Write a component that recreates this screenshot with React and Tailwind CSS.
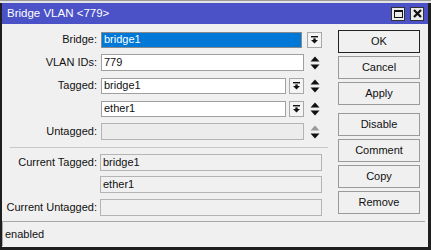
import React from "react";

function DropBtn() {
  return (
    <div className="w-[15px] h-[16px] border border-[#a8a8a8] bg-[#f4f4f4] flex items-center justify-center shrink-0">
      <svg width="7" height="8" viewBox="0 0 7 8">
        <rect x="0" y="0" width="7" height="1.4" fill="#111" />
        <rect x="2.3" y="2.4" width="2.4" height="1.8" fill="#111" />
        <path d="M0 4 H7 L3.5 7.6 Z" fill="#111" />
      </svg>
    </div>
  );
}

function UpDown({ disabled }) {
  return (
    <svg width="10" height="14" viewBox="0 0 10 14" className="shrink-0">
      <path d="M5 0.5 L9.5 5.5 H0.5 Z" fill={disabled ? "#9a9a9a" : "#111"} />
      <path d="M0.5 8.5 H9.5 L5 13.5 Z" fill="#111" />
    </svg>
  );
}

function Label({ children, w = "w-[95px]" }) {
  return <div className={`${w} shrink-0 text-right pr-0 leading-none`}>{children}</div>;
}

function Btn({ children, primary }) {
  return (
    <div
      className={`h-[23px] w-[82px] flex items-center justify-center bg-[#f0f0f0] border ${
        primary ? "border-[#222]" : "border-[#9a9a9a]"
      } text-[11px] text-[#111]`}
    >
      {children}
    </div>
  );
}

export default function App() {
  return (
    <div className="w-[431px] h-[250px] overflow-hidden bg-[#ededed] font-['Liberation_Sans',Arial,sans-serif] text-[11px] text-[#111]">
      <div className="h-[3px] bg-[#e4e4e4] border-t border-[#9a9a9a]" />
      <div className="h-[247px] flex flex-col border-l-2 border-r-[3px] border-b-[3px] border-[#1e1e1e] bg-[#f0f0f0]">
        {/* Title bar */}
        <div className="h-[21px] bg-[#4b51c6] flex items-center pl-[5px] pr-[4px] shrink-0">
          <div className="text-white text-[11.5px] flex-1 leading-none">Bridge VLAN &lt;779&gt;</div>
          <div className="flex gap-[5px]">
            <div className="w-[14px] h-[14px] bg-[#ebebeb] border border-[#333] flex items-center justify-center">
              <div className="w-[9px] h-[8px] border border-[#111] border-t-2" />
            </div>
            <div className="w-[14px] h-[14px] bg-[#ebebeb] border border-[#333] flex items-center justify-center">
              <svg width="9" height="9" viewBox="0 0 9 9">
                <path d="M1 1 L8 8 M8 1 L1 8" stroke="#111" strokeWidth="2.2" />
              </svg>
            </div>
          </div>
        </div>

        {/* Body */}
        <div className="h-[197px] flex shrink-0">
          <div className="w-[320px] pt-[7px] flex flex-col">
            <div className="flex items-center h-[17px] gap-[4px]">
              <Label>Bridge:</Label>
              <div className="w-[202px] h-[16px] border border-[#8a8a8a] bg-[#0078d7] text-white flex items-center pl-[2px]">bridge1</div>
              <div className="ml-[1px]"><DropBtn /></div>
            </div>
            <div className="flex items-center h-[17px] gap-[4px] mt-[6px]">
              <Label>VLAN IDs:</Label>
              <div className="w-[203px] h-[17px] border border-[#a0a0a0] bg-white flex items-center pl-[2px]">779</div>
              <div className="ml-[2px]"><UpDown /></div>
            </div>
            <div className="flex items-center h-[17px] gap-[4px] mt-[6px]">
              <Label>Tagged:</Label>
              <div className="w-[185px] h-[16px] border border-[#a0a0a0] bg-white flex items-center pl-[2px]">bridge1</div>
              <div className="ml-[-1px]"><DropBtn /></div>
              <div className="ml-[2px]"><UpDown /></div>
            </div>
            <div className="flex items-center h-[17px] gap-[4px] mt-[6px]">
              <Label> </Label>
              <div className="w-[185px] h-[16px] border border-[#a0a0a0] bg-white flex items-center pl-[2px]">ether1</div>
              <div className="ml-[-1px]"><DropBtn /></div>
              <div className="ml-[2px]"><UpDown /></div>
            </div>
            <div className="flex items-center h-[17px] gap-[4px] mt-[6px]">
              <Label>Untagged:</Label>
              <div className="w-[203px] h-[17px] border border-[#b4b4b4] bg-[#ececec]" />
              <div className="ml-[2px]"><UpDown disabled /></div>
            </div>
            <div className="h-px bg-[#c8c8c8] ml-[8px] mr-[-6px] mt-[7px]" />
            <div className="flex items-center h-[17px] gap-[3px] mt-[6px]">
              <Label>Current Tagged:</Label>
              <div className="w-[222px] h-[17px] border border-[#b4b4b4] bg-[#f0f0f0] flex items-center pl-[2px]">bridge1</div>
            </div>
            <div className="flex items-center h-[17px] gap-[3px] mt-[5px]">
              <Label> </Label>
              <div className="w-[222px] h-[17px] border border-[#b4b4b4] bg-[#f0f0f0] flex items-center pl-[2px]">ether1</div>
            </div>
            <div className="flex items-center h-[17px] gap-[3px] mt-[6px]">
              <Label>Current Untagged:</Label>
              <div className="w-[222px] h-[17px] border border-[#b4b4b4] bg-[#f0f0f0]" />
            </div>
          </div>
          <div className="ml-[16px] pt-[6px] flex flex-col gap-[3px]">
            <Btn primary>OK</Btn>
            <Btn>Cancel</Btn>
            <Btn>Apply</Btn>
            <div className="mt-[5px]"><Btn>Disable</Btn></div>
            <Btn>Comment</Btn>
            <Btn>Copy</Btn>
            <Btn>Remove</Btn>
          </div>
        </div>

        {/* Status bar */}
        <div className="h-[25px] mr-[3px] border-t border-l border-[#a8a8a8] flex items-center pl-[2px] shrink-0">
          enabled
        </div>
      </div>
    </div>
  );
}
